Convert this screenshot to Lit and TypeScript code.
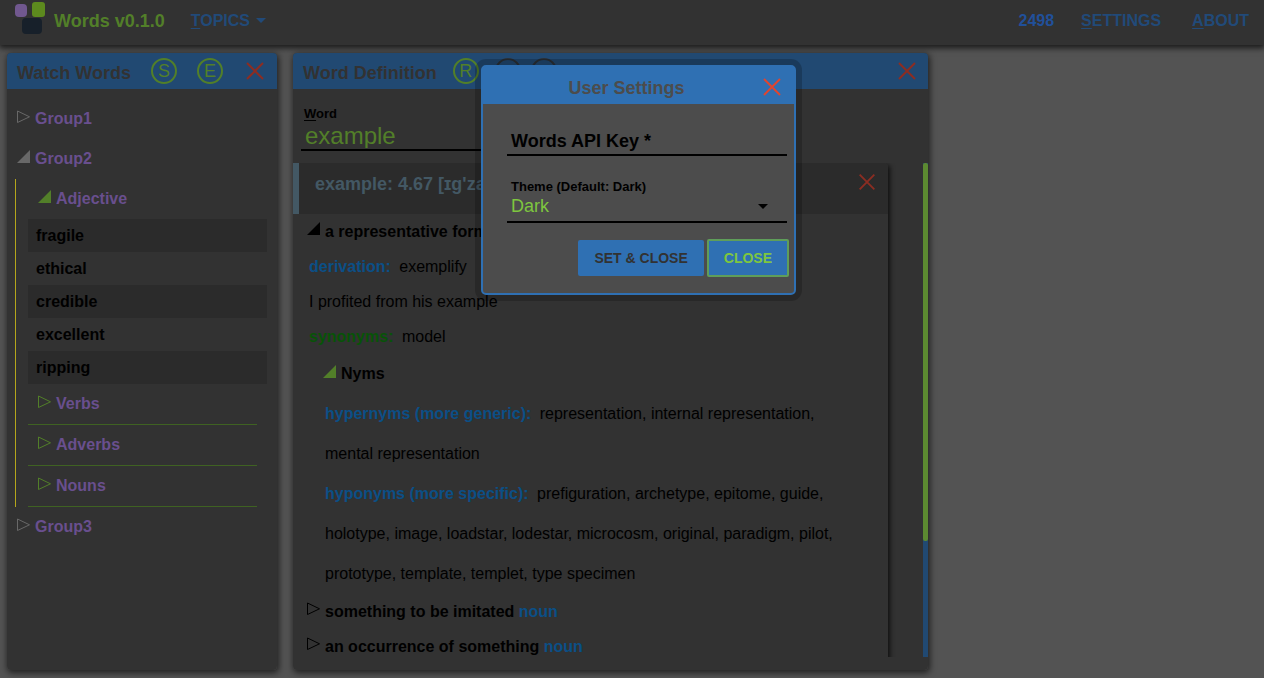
import { LitElement, html, css, svg } from "lit";
import { customElement } from "lit/decorators.js";

const cross = html`<svg class="cross" viewBox="0 0 24 24" aria-hidden="true">
  <path d="M4 4 20 20M20 4 4 20" />
</svg>`;

const shut = html`<svg class="mark" viewBox="0 0 14 14" aria-hidden="true">
  <path d="M.5 1v11.5L12.5 6.8Z" fill="none" stroke="currentColor" />
</svg>`;

const open = html`<svg class="mark" viewBox="0 0 14 14" aria-hidden="true">
  <path d="M13 0v13H0Z" fill="currentColor" />
</svg>`;

const caret = html`<svg class="caret" viewBox="0 0 10 5" aria-hidden="true">
  <path d="M0 0h10L5 5Z" fill="currentColor" />
</svg>`;

const logo = html`<svg class="logo" viewBox="0 0 32 34" aria-hidden="true">
  ${svg`<rect x="0" y="3" width="12" height="13" rx="4" fill="#71588f" />
  <rect x="17" y="1" width="13" height="15" rx="3" fill="#5d8a1e" />
  <rect x="7" y="17" width="20" height="16" rx="4" fill="#17202a" />`}
</svg>`;

@customElement("app-root")
export class AppRoot extends LitElement {
  static styles = css`
    :host {
      display: flex;
      flex-direction: column;
      position: relative;
      height: 100vh;
      overflow: hidden;
      background: #535353;
      color: #000;
      font: 16px/20px "Liberation Sans", Arial, sans-serif;
    }
    * { box-sizing: border-box; }
    h1, h2, h3, p, ul { margin: 0; padding: 0; }
    button, input, select {
      font: inherit;
      color: inherit;
      background: none;
      border: 0;
      padding: 0;
      margin: 0;
      border-radius: 0;
      outline: none;
    }
    button { cursor: pointer; }
    a { color: inherit; text-decoration: none; }

    .nav {
      flex: none;
      display: flex;
      align-items: center;
      height: 45px;
      padding: 0 15px 4px;
      background: #323232;
      color: #214a79;
      font-weight: bold;
      box-shadow: 0 2px 6px 1px rgba(0, 0, 0, 0.7);
    }
    .logo { width: 32px; height: 34px; margin: 0 8px 6px 0; flex: none; }
    .brand { font-size: 18px; color: #527f29; margin: 0 26px 0 -1px; }
    .topics { display: flex; align-items: center; gap: 6px; font-weight: bold; }
    .caret { width: 10px; height: 5px; flex: none; }
    .links { display: flex; gap: 27px; margin-left: auto; }
    .links a + a { margin-left: 4px; }
    .count { color: #21509a; }

    .work {
      flex: 1;
      min-height: 0;
      display: flex;
      gap: 16px;
      padding: 8px 7px;
    }
    .panel {
      display: flex;
      flex-direction: column;
      min-height: 0;
      background: #323232;
      border-radius: 4px;
      overflow: hidden;
    }
    .shell {
      display: grid;
      min-height: 0;
      border-radius: 4px;
      box-shadow: 1px 2px 6px 1px rgba(0, 0, 0, 0.6);
    }
    .watch { flex: 0 0 270px; }
    .definition { flex: 0 1 635px; }
    .bar {
      flex: none;
      display: flex;
      align-items: center;
      gap: 20px;
      height: 36px;
      padding: 0 10px;
      background: #214972;
    }
    .bar h2 { font-size: 18px; color: #323232; padding-top: 3px; white-space: nowrap; }
    .definition .bar { gap: 16px; padding-right: 9px; }
    .round {
      flex: none;
      width: 26px;
      height: 26px;
      border: 2px solid #527f29;
      border-radius: 50%;
      color: #527f29;
      font-size: 18px;
      line-height: 22px;
    }
    .off { border-color: #2b3036; color: #2b3036; }
    .pair { display: flex; gap: 10px; }
    .close { display: flex; color: #8c2d22; }
    .cross {
      width: 24px;
      height: 24px;
      fill: none;
      stroke: currentColor;
      stroke-width: 2;
    }
    .end { margin-left: auto; }

    .groups { padding: 10px; color: #694f8e; }
    .node {
      display: flex;
      align-items: center;
      gap: 4px;
      width: 100%;
      height: 40px;
      color: inherit;
      font-weight: bold;
      text-align: left;
    }
    .mark { width: 14px; height: 14px; flex: none; margin-bottom: 5px; color: #686868; }
    .branch {
      margin-left: -2px;
      padding-left: 12px;
      border-left: 1px solid #b5a61c;
    }
    .branch .node { padding-left: 10px; }
    .branch .mark, .nyms .mark { color: #527f29; }
    .ruled { border-bottom: 1px solid #3f6222; margin-right: 10px; }
    .words { list-style: none; color: #000; font-weight: bold; }
    .words li { height: 33px; padding: 0 8px; line-height: 33px; }
    .words li:nth-child(odd) { background: #2b2b2b; }

    .search {
      flex: none;
      display: flex;
      flex-direction: column;
      height: 62px;
      width: 75%;
      margin: 0 0 12px 8px;
      padding: 15px 3px 0;
      border-bottom: 2px solid #000;
    }
    .search label { font-size: 13px; font-weight: bold; }
    .search input { font-size: 24px; line-height: 24px; color: #527f29; width: 100%; height: 24px; padding-left: 1px; }
    u { text-underline-offset: 2px; text-decoration-thickness: 1px; }

    .scroll {
      flex: 1;
      min-height: 0;
      display: flex;
      justify-content: space-between;
      margin-bottom: 13px;
      overflow: hidden;
    }
    .card {
      flex: 0 0 595px;
      align-self: flex-start;
      padding-bottom: 24px;
      border-radius: 4px;
      box-shadow: 2px 2px 5px rgba(0, 0, 0, 0.7);
    }
    .head {
      display: flex;
      align-items: flex-start;
      height: 51px;
      padding: 8px 10px 0 16px;
      border-left: 6px solid #435864;
      border-top-right-radius: 4px;
      background: #2b2b2b;
    }
    .head h3 { font-size: 18px; line-height: 26px; color: #435864; }
    .head .cross { width: 22px; height: 22px; }
    .sense { height: 35px; padding-left: 14px; }
    .card .mark { color: #000; }
    .card .nyms .mark { color: #527f29; }
    .line { height: 35px; padding-left: 16px; line-height: 35px; }
    .nyms { height: 40px; padding-left: 30px; }
    .list { padding: 0 50px 0 32px; line-height: 40px; }
    .key { color: #0b4f86; font-weight: bold; margin-right: 4px; }
    .green { color: #075307; }
    .noun { color: #0b4f86; }
    .track { flex: 0 0 5px; background: #214972; }
    .thumb { height: 378px; background: #5c8a31; border-radius: 2px; }

    .dialog {
      position: absolute;
      top: 65px;
      left: 50%;
      width: 315px;
      margin-left: -151px;
      background: #4c4c4c;
      border: 2px solid #2f70b3;
      border-radius: 5px;
      box-shadow: 0 0 0 6px rgba(0, 0, 0, 0.2);
    }
    .top {
      display: flex;
      align-items: center;
      height: 37px;
      padding: 0 10px;
      background: #2f70b3;
    }
    .top h2 { flex: 1; font-size: 18px; color: #4c4c4c; text-align: center; padding-top: 4px; }
    .top .close { color: #e0452f; padding-top: 3px; }
    form { padding: 26px 5px 16px 24px; }
    .field {
      position: relative;
      display: flex;
      flex-direction: column;
      margin-right: 2px;
      border-bottom: 2px solid #000;
    }
    .key-field { height: 26px; }
    .key-field label { position: absolute; left: 4px; top: 0; font-size: 18px; line-height: 22px; font-weight: bold; }
    .key-field input { width: 100%; height: 24px; }
    .theme { height: 67px; padding: 22px 4px 0; }
    .theme label { font-size: 13px; line-height: 18px; font-weight: bold; }
    .theme select { appearance: none; width: 100%; height: 20px; font-size: 18px; color: #7ec63f; }
    .theme .caret { position: absolute; right: 19px; bottom: 12px; }
    .actions { display: flex; justify-content: flex-end; align-items: center; gap: 3px; margin-top: 16px; }
    .act {
      height: 36px;
      padding: 0 16px;
      border-radius: 2px;
      background: #2f70b3;
      color: #323232;
      font-size: 14px;
      font-weight: bold;
    }
    .focus { height: 38px; border: 2px solid #5f9e5a; padding: 0 15px; color: #7ec63f; }
  `;

  private branch(name: string) {
    return html`<div class="ruled"><button class="node">${shut}${name}</button></div>`;
  }

  render() {
    return html`
      <nav class="nav">
        ${logo}<h1 class="brand">Words v0.1.0</h1>
        <button class="topics"><span><u>T</u>OPICS</span>${caret}</button>
        <div class="links">
          <span class="count">2498</span>
          <a href="#settings"><u>S</u>ETTINGS</a>
          <a href="#about"><u>A</u>BOUT</a>
        </div>
      </nav>
      <main class="work">
        <section class="shell watch"><div class="panel">
          <header class="bar">
            <h2>Watch Words</h2>
            <button class="round">S</button>
            <button class="round">E</button>
            <button class="close end" aria-label="Close watch words">${cross}</button>
          </header>
          <div class="groups">
            <button class="node">${shut}Group1</button>
            <button class="node">${open}Group2</button>
            <div class="branch">
              <button class="node">${open}Adjective</button>
              <ul class="words">
                ${["fragile", "ethical", "credible", "excellent", "ripping"].map((w) => html`<li>${w}</li>`)}
              </ul>
              ${["Verbs", "Adverbs", "Nouns"].map((n) => this.branch(n))}
            </div>
            <button class="node">${shut}Group3</button>
          </div>
        </div></section>
        <section class="shell definition"><div class="panel">
          <header class="bar">
            <h2>Word Definition</h2>
            <button class="round">R</button>
            <div class="pair">
              <button class="round off" aria-label="Back" disabled></button>
              <button class="round off" aria-label="Forward" disabled></button>
            </div>
            <button class="close end" aria-label="Close word definition">${cross}</button>
          </header>
          <div class="search">
            <label for="word"><u>W</u>ord</label>
            <input id="word" .value=${"example"} />
          </div>
          <div class="scroll">
            <article class="card">
              <header class="head">
                <h3>example: 4.67 [ɪg'zæmpəl]</h3>
                <button class="close end" aria-label="Remove example">${cross}</button>
              </header>
              <button class="node sense">${open}<span>a representative form or pattern <span class="noun">noun</span></span></button>
              <p class="line"><span class="key">derivation:</span> exemplify</p>
              <p class="line">I profited from his example</p>
              <p class="line"><span class="key green">synonyms:</span> model</p>
              <button class="node nyms">${open}Nyms</button>
              <p class="list"><span class="key">hypernyms (more generic):</span> representation, internal representation, mental representation</p>
              <p class="list"><span class="key">hyponyms (more specific):</span> prefiguration, archetype, epitome, guide, holotype, image, loadstar, lodestar, microcosm, original, paradigm, pilot, prototype, template, templet, type specimen</p>
              <button class="node sense">${shut}<span>something to be imitated <span class="noun">noun</span></span></button>
              <button class="node sense">${shut}<span>an occurrence of something <span class="noun">noun</span></span></button>
            </article>
            <div class="track"><div class="thumb"></div></div>
          </div>
        </div></section>
      </main>
      <div class="dialog" role="dialog" aria-labelledby="title">
        <header class="top">
          <h2 id="title">User Settings</h2>
          <button class="close" aria-label="Close settings">${cross}</button>
        </header>
        <form>
          <div class="field key-field">
            <input id="api" />
            <label for="api">Words API Key *</label>
          </div>
          <div class="field theme">
            <label for="theme">Theme (Default: Dark)</label>
            <select id="theme"><option>Dark</option><option>Light</option></select>
            ${caret}
          </div>
          <div class="actions">
            <button type="button" class="act">SET &amp; CLOSE</button>
            <button type="button" class="act focus">CLOSE</button>
          </div>
        </form>
      </div>
    `;
  }
}
